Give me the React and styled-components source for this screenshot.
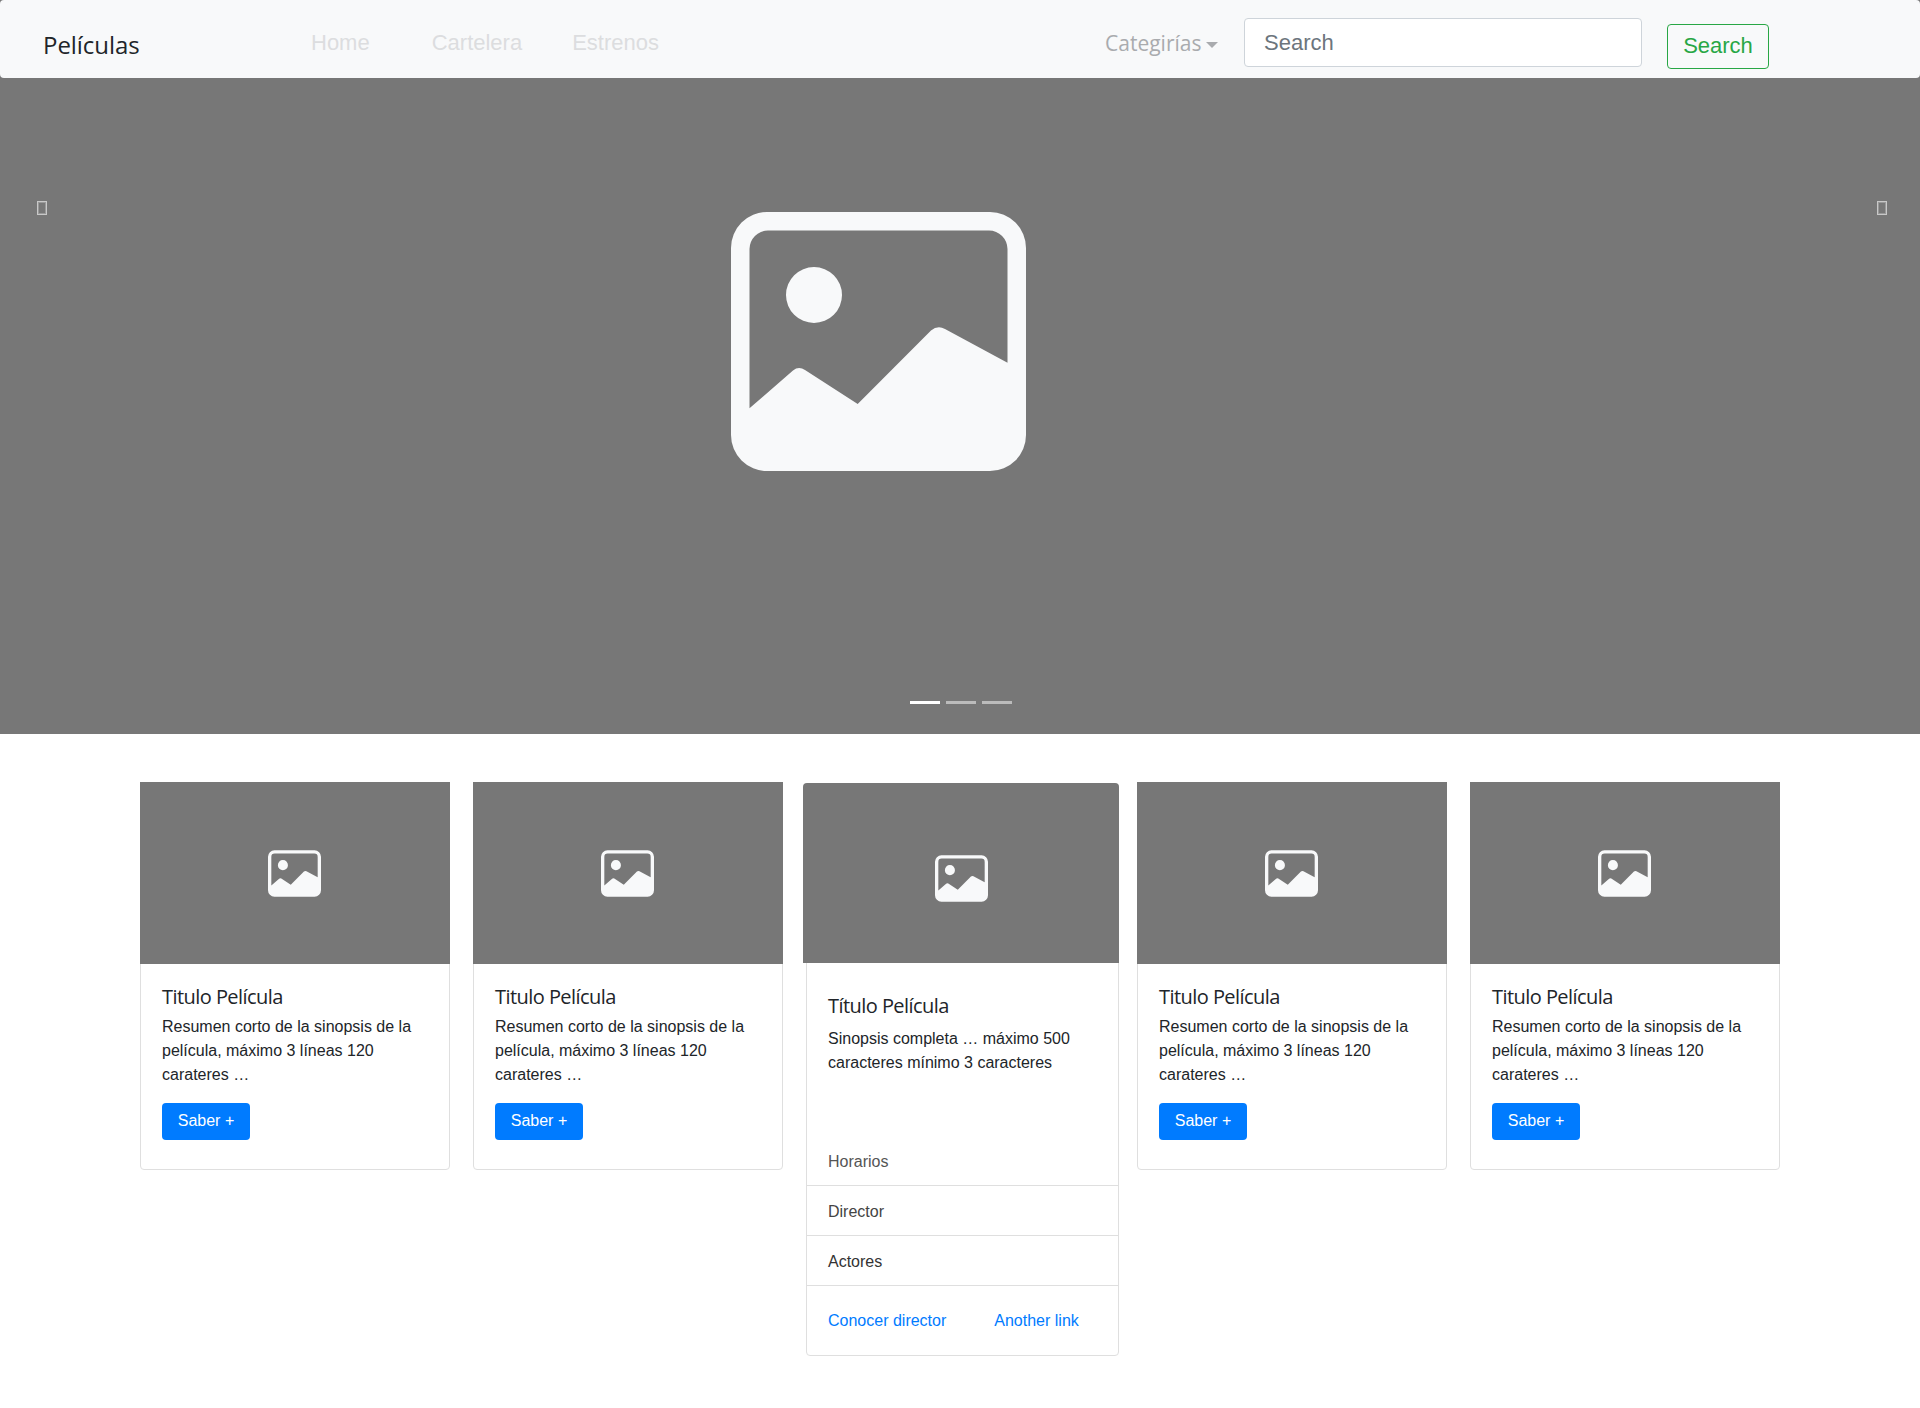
import React from 'react';
import styled, { createGlobalStyle } from 'styled-components';

const GlobalStyle = createGlobalStyle`
  * { box-sizing: border-box; }
  body {
    margin: 0;
    background: #fff;
    color: #212529;
    font-family: "Liberation Sans", Arial, sans-serif;
    font-size: 16px;
    line-height: 24px;
  }
`;

const Page = styled.div`
  min-height: 1408px;
`;

const Header = styled.header`
  background: #777;
`;

const Navbar = styled.nav`
  display: flex;
  align-items: flex-start;
  height: 78px;
  padding-left: 43px;
  background: #f8f9fa;
  border-radius: 4px;
`;

const Brand = styled.a`
  width: 268px;
  margin-top: 27px;
  font-family: "Open Sans", sans-serif;
  font-size: 24px;
  line-height: 36px;
  color: #212529;
  letter-spacing: -0.05px;
`;

const NavLinks = styled.div`
  display: flex;
  gap: 50px;
  width: 794px;
  margin-top: 27px;
`;

const NavLink = styled.a`
  font-size: 22px;
  line-height: 32px;
  color: #dcdddf;
  margin-right: ${props => props.wide ? '12px' : '0'};
`;

const Dropdown = styled.a`
  display: flex;
  align-items: center;
  width: 139px;
  margin-top: 26px;
  font-family: "Open Sans", sans-serif;
  font-size: 21px;
  line-height: 34px;
  color: #a9abae;

  &::after {
    content: '';
    margin: 4px 0 0 5px;
    border-top: 6px solid #a9abae;
    border-left: 6px solid transparent;
    border-right: 6px solid transparent;
  }
`;

const SearchInput = styled.input`
  width: 398px;
  height: 49px;
  margin-top: 18px;
  padding: 0 19px;
  background: #fff;
  border: 1px solid #ced4da;
  border-radius: 4px;
  font-family: "Liberation Sans", Arial, sans-serif;
  font-size: 22px;
  color: #495057;

  &::placeholder {
    color: #6c757d;
    opacity: 1;
  }
`;

const SearchButton = styled.button`
  width: 102px;
  height: 45px;
  margin: 24px 0 0 25px;
  padding: 0 0 2px;
  background: transparent;
  border: 1px solid #28a745;
  border-radius: 4px;
  font-family: "Liberation Sans", Arial, sans-serif;
  font-size: 22px;
  color: #28a745;
`;

const Hero = styled.section`
  position: relative;
  display: flex;
  justify-content: center;
  height: 656px;
  padding: 134px 0 0 0;
  background: #777;
`;

const HeroImage = styled.div`
  margin-right: 163px;
`;

const Tofu = styled.span`
  position: absolute;
  top: 123px;
  ${props => props.side}: ${props => props.side === 'left' ? '37px' : '33px'};
  width: 10px;
  height: 14px;
  border: 1px solid rgba(255, 255, 255, 0.6);
  box-shadow: inset 0 0 0 1px rgba(255, 255, 255, 0.25);
`;

const Indicators = styled.div`
  position: absolute;
  left: 910px;
  top: 623px;
  display: flex;
  gap: 6px;
`;

const Indicator = styled.span`
  width: 30px;
  height: 3px;
  background: #fff;
  opacity: ${props => props.active ? 1 : 0.5};
`;

const CardRow = styled.main`
  display: flex;
  align-items: flex-start;
  gap: 23px;
  padding: 48px 0 0 140px;
`;

const Card = styled.article`
  display: flex;
  flex-direction: column;
  width: ${props => props.featured ? '313px' : '310px'};
  height: ${props => props.featured ? '573px' : '388px'};
  margin: ${props => props.featured ? '1px -5px 0 0' : '0'};
  background: #fff;
  border: 1px solid #dfdfdf;
  border-radius: 4px;
`;

const CardImage = styled.div`
  display: flex;
  align-items: center;
  justify-content: center;
  flex: none;
  height: ${props => props.featured ? '180px' : '182px'};
  margin: ${props => props.featured ? '-1px -1px 0 -4px' : '-1px -1px 0 -1px'};
  padding: ${props => props.featured ? '10px 0 0 0' : '0 2px 0 0'};
  background: #777;
  border-radius: ${props => props.featured ? '4px 4px 0 0' : '0'};
`;

const CardBody = styled.div`
  padding: ${props => props.featured ? '31px 21px 0' : '21px 21px 0'};
  height: ${props => props.featured ? '173px' : 'auto'};
`;

const CardTitle = styled.h5`
  margin: 0 0 ${props => props.featured ? '9px' : '6px'};
  font-family: "Open Sans", sans-serif;
  font-size: 20px;
  font-weight: 400;
  line-height: 24px;
  letter-spacing: -0.55px;
  color: #212529;
`;

const CardText = styled.p`
  margin: 0;
  font-size: 16px;
  line-height: 24px;
  color: #212529;
`;

const Button = styled.a`
  display: block;
  width: 88px;
  height: 37px;
  margin-top: 16px;
  background: #007bff;
  border-radius: 4px;
  font-size: 16px;
  line-height: 35px;
  text-align: center;
  color: #fff;
`;

const ListGroup = styled.ul`
  margin: 0;
  padding: 0;
  list-style: none;
`;

const ListItem = styled.li`
  height: 50px;
  padding: 14px 21px 0;
  border-bottom: 1px solid #dfdfdf;
  font-size: 16px;
  line-height: 24px;
  color: ${props => props.tone};
`;

const CardLinks = styled.div`
  display: flex;
  gap: 48px;
  padding: 23px 21px 21px;
`;

const CardLink = styled.a`
  font-size: 16px;
  line-height: 24px;
  color: #007bff;
`;

const ImageIcon = ({ width, height }) => (
  <svg width={width} height={height} viewBox="0 0 295 259" fill="#f8f9fa" style={{ display: 'block' }}>
    <path
      fillRule="evenodd"
      d="M36 0H259a36 36 0 0 1 36 36V223a36 36 0 0 1-36 36H36a36 36 0 0 1-36-36V36A36 36 0 0 1 36 0Z
         M37 18.5a18.5 18.5 0 0 0-18.5 18.5V196.3L62 158.5Q67.7 153.8 74 158L126.7 192L200 118.5Q206.7 113 214 117L276.5 150.7V37a18.5 18.5 0 0 0-18.5-18.5Z
         M83 55a28 28 0 1 0 0 56a28 28 0 1 0 0-56Z"
    />
  </svg>
);

const MovieCard = () => (
  <Card>
    <CardImage><ImageIcon width={53} height={47} /></CardImage>
    <CardBody>
      <CardTitle>Titulo Película</CardTitle>
      <CardText>Resumen corto de la sinopsis de la película, máximo 3 líneas 120 carateres …</CardText>
      <Button>Saber +</Button>
    </CardBody>
  </Card>
);

const FeaturedCard = () => (
  <Card featured>
    <CardImage featured><ImageIcon width={53} height={47} /></CardImage>
    <CardBody featured>
      <CardTitle featured>Título Película</CardTitle>
      <CardText>Sinopsis completa … máximo 500 caracteres mínimo 3 caracteres</CardText>
    </CardBody>
    <ListGroup>
      <ListItem tone="#555">Horarios</ListItem>
      <ListItem tone="#444">Director</ListItem>
      <ListItem tone="#333">Actores</ListItem>
    </ListGroup>
    <CardLinks>
      <CardLink>Conocer director</CardLink>
      <CardLink>Another link</CardLink>
    </CardLinks>
  </Card>
);

export default function App() {
  return (
    <Page>
      <GlobalStyle />
      <Header>
        <Navbar>
          <Brand>Películas</Brand>
          <NavLinks>
            <NavLink wide>Home</NavLink>
            <NavLink>Cartelera</NavLink>
            <NavLink>Estrenos</NavLink>
          </NavLinks>
          <Dropdown>Categirías</Dropdown>
          <SearchInput placeholder="Search" />
          <SearchButton>Search</SearchButton>
        </Navbar>
      </Header>
      <Hero>
        <Tofu side="left" />
        <HeroImage><ImageIcon width={295} height={259} /></HeroImage>
        <Tofu side="right" />
        <Indicators>
          <Indicator active />
          <Indicator />
          <Indicator />
        </Indicators>
      </Hero>
      <CardRow>
        <MovieCard />
        <MovieCard />
        <FeaturedCard />
        <MovieCard />
        <MovieCard />
      </CardRow>
    </Page>
  );
}
